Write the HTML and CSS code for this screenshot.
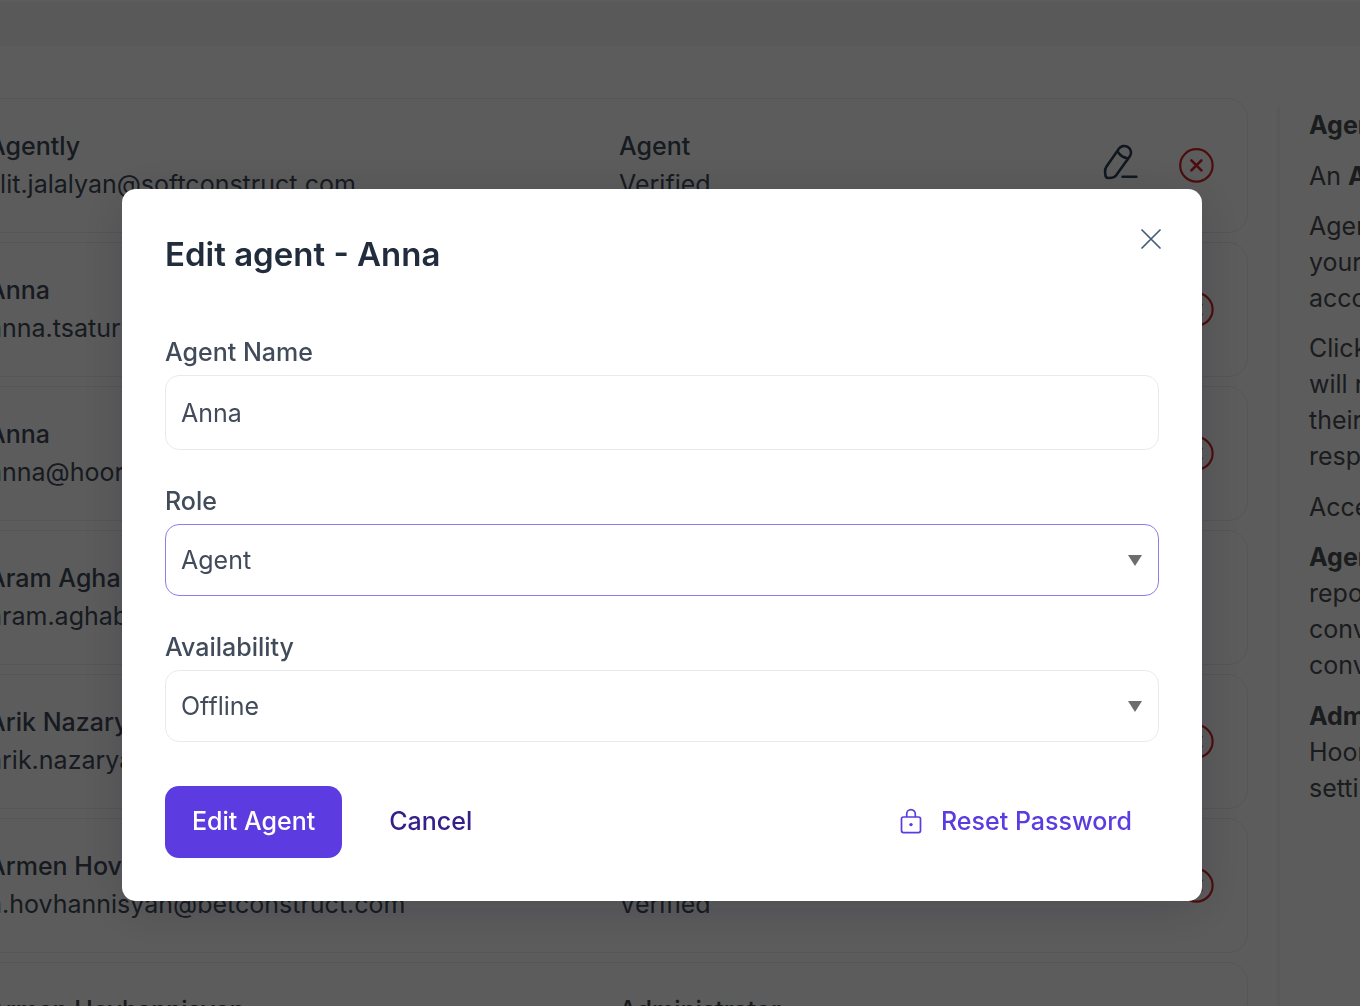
FILE: index.html
```html
<!DOCTYPE html>
<html lang="en">
<head>
<meta charset="utf-8">
<meta name="viewport" content="width=device-width, initial-scale=1">
<title>Agents</title>
<link rel="stylesheet" href="styles.css">
</head>
<body>
<svg class="sprite" aria-hidden="true">
  <symbol id="icon-edit" viewBox="-1.8 -.5 37.5 43.75">
    <g fill="none" stroke="currentColor" stroke-width="2.7" stroke-linecap="round" stroke-linejoin="round">
      <path d="M15.6 4.6C17.6 1.6 21.6 .6 25 2.6C28.6 4.8 29.4 9 27.2 12.2L12.8 32.2C11.6 33.8 10.2 34.6 8.4 34.7L5.2 34.9C3.2 35 1.8 33.8 1.7 31.8L1.4 28.4C1.2 26.4 1.7 24.6 2.9 22.9Z"/>
      <path d="M14.6 7.4C16.4 10.6 19.6 13.2 24 14.2M19.6 33.6H34"/>
    </g>
  </symbol>
  <symbol id="icon-remove" viewBox="0 0 36 36">
    <g fill="none" stroke="currentColor" stroke-linecap="round">
      <circle cx="18.4" cy="18.4" r="16.2" stroke-width="2.2"/>
      <path d="M13.4 13.4L23.4 23.4M23.4 13.4L13.4 23.4" stroke-width="2.7"/>
    </g>
  </symbol>
</svg>

<div class="page">
  <header class="topbar"></header>
  <div class="shell">
    <main class="agents">
      <article class="agent">
        <div><h2 class="name">Agently</h2><p class="detail">lilit.jalalyan@softconstruct.com</p></div>
        <div><p class="name">Agent</p><p class="detail">Verified</p></div>
        <div class="tools">
          <button class="tool edit" type="button" aria-label="Edit"><svg><use href="#icon-edit"/></svg></button>
          <button class="tool remove" type="button" aria-label="Remove"><svg><use href="#icon-remove"/></svg></button>
        </div>
      </article>
      <article class="agent">
        <div><h2 class="name">Anna</h2><p class="detail">anna.tsatur</p></div>
        <div><p class="name">Agent</p><p class="detail">Verified</p></div>
        <div class="tools">
          <button class="tool edit" type="button" aria-label="Edit"><svg><use href="#icon-edit"/></svg></button>
          <button class="tool remove" type="button" aria-label="Remove"><svg><use href="#icon-remove"/></svg></button>
        </div>
      </article>
      <article class="agent">
        <div><h2 class="name">Anna</h2><p class="detail">anna@hoory.com</p></div>
        <div><p class="name">Agent</p><p class="detail">Verified</p></div>
        <div class="tools">
          <button class="tool edit" type="button" aria-label="Edit"><svg><use href="#icon-edit"/></svg></button>
          <button class="tool remove" type="button" aria-label="Remove"><svg><use href="#icon-remove"/></svg></button>
        </div>
      </article>
      <article class="agent">
        <div><h2 class="name">Aram Aghab</h2><p class="detail">aram.aghab</p></div>
        <div><p class="name">Agent</p><p class="detail">Verified</p></div>
        <div class="tools"></div>
      </article>
      <article class="agent">
        <div><h2 class="name">Arik Nazaryan</h2><p class="detail">arik.nazaryan</p></div>
        <div><p class="name">Agent</p><p class="detail">Verified</p></div>
        <div class="tools">
          <button class="tool edit" type="button" aria-label="Edit"><svg><use href="#icon-edit"/></svg></button>
          <button class="tool remove" type="button" aria-label="Remove"><svg><use href="#icon-remove"/></svg></button>
        </div>
      </article>
      <article class="agent">
        <div><h2 class="name">Armen Hovhannisyan</h2><p class="detail">a.hovhannisyan@betconstruct.com</p></div>
        <div><p class="name">Agent</p><p class="detail">Verified</p></div>
        <div class="tools">
          <button class="tool edit" type="button" aria-label="Edit"><svg><use href="#icon-edit"/></svg></button>
          <button class="tool remove" type="button" aria-label="Remove"><svg><use href="#icon-remove"/></svg></button>
        </div>
      </article>
      <article class="agent">
        <div><h2 class="name">Armen Hovhannisyan</h2><p class="detail">Verified</p></div>
        <div><p class="name">Administrator</p><p class="detail">Verified</p></div>
        <div class="tools"></div>
      </article>
    </main>
    <aside class="help">
      <p><strong>Agents</strong></p>
      <p>An <strong>Agent</strong></p>
      <p>Agents<br>your<br>account</p>
      <p>Click<br>will receive<br>their<br>respond</p>
      <p>Access</p>
      <p><strong>Agent</strong><br>reports<br>conversations<br>conversations</p>
      <p><strong>Administrator</strong><br>Hoory<br>settings</p>
    </aside>
  </div>
</div>

<div class="overlay">
  <form class="dialog" role="dialog" aria-modal="true" aria-labelledby="dialog-title">
    <div class="dialog-head">
      <h1 class="dialog-title" id="dialog-title">Edit agent - Anna</h1>
      <button class="close" type="button" aria-label="Close">
        <svg viewBox="0 0 20 20"><path d="M1 1L19 19M19 1L1 19" fill="none" stroke="currentColor" stroke-width="1.7" stroke-linecap="round"/></svg>
      </button>
    </div>
    <div class="fields">
      <div class="field">
        <label for="agent-name">Agent Name</label>
        <input class="control text" id="agent-name" type="text" value="Anna">
      </div>
      <div class="field">
        <label for="role">Role</label>
        <div class="picker">
          <select class="control active" id="role"><option>Agent</option><option>Administrator</option></select>
          <svg class="arrow" viewBox="0 0 14 11" aria-hidden="true"><path d="M0 0H14L7 11Z" fill="currentColor"/></svg>
        </div>
      </div>
      <div class="field">
        <label for="availability">Availability</label>
        <div class="picker">
          <select class="control" id="availability"><option>Offline</option><option>Online</option></select>
          <svg class="arrow" viewBox="0 0 14 11" aria-hidden="true"><path d="M0 0H14L7 11Z" fill="currentColor"/></svg>
        </div>
      </div>
    </div>
    <div class="actions">
      <button class="button primary" type="submit">Edit Agent</button>
      <button class="button cancel" type="button">Cancel</button>
      <button class="button reset" type="button">
        <svg viewBox="0 0 22 26" aria-hidden="true"><g fill="none" stroke="currentColor" stroke-width="1.7" stroke-linejoin="round"><rect x="1.5" y="9" width="19" height="15.6" rx="2"/><path d="M6.7 9V6A4.3 4.3 0 0 1 15.3 6V9"/></g><circle cx="11" cy="16.6" r="1.7" fill="currentColor"/></svg>
        Reset Password
      </button>
    </div>
  </form>
</div>
</body>
</html>
```
FILE: styles.css
```css
:root {
  --ink: #414b5a;
  --line: #e7ebf1;
  --violet: #5c3be0;
}

* { box-sizing: border-box; }

body {
  margin: 0;
  height: 100vh;
  overflow: hidden;
  background: #fff;
  color: var(--ink);
  font: 400 25px/36px Inter, "Liberation Sans", sans-serif;
}

h1, h2, p { margin: 0; }

button {
  padding: 0;
  border: 0;
  background: none;
  color: inherit;
  font: inherit;
  cursor: pointer;
}

svg { display: block; }

.sprite {
  position: absolute;
  width: 0;
  height: 0;
}

.page {
  height: 100vh;
  overflow: hidden;
}

.topbar {
  height: 46px;
  border-top: 2px solid #fff;
  background: #f7f7f8;
}

/* The list and the help column run past both sides of the window */
.shell {
  display: grid;
  grid-template-columns: minmax(0, 1fr) 363px;
  gap: 29px;
  margin: 0 -280px 0 -40px;
  padding-top: 52px;
}

.agents {
  display: flex;
  flex-direction: column;
  gap: 9px;
}

.agent {
  display: grid;
  grid-template-columns: minmax(0, 631px) minmax(0, 1fr) auto;
  align-items: center;
  padding: 28px 33px 29px 27px;
  border: 1px solid #ebebee;
  border-radius: 20px;
  line-height: 38px;
}

.name {
  font-size: 25px;
  font-weight: 500;
}

.tools {
  display: flex;
  align-items: center;
  gap: 40px;
  color: #2e4057;
}

.tool svg {
  width: 36px;
  height: 36px;
}

.edit svg { height: 42px; }

.remove { color: #cf2626; }

.help {
  margin-top: 9px;
  padding-left: 29px;
  border-left: 3px solid #f4f5f7;
  color: #4d4f55;
  white-space: nowrap;
}

.help p { margin-bottom: 14px; }

.help p:nth-child(3n + 1),
.help p:nth-child(6) { margin-bottom: 15px; }

.overlay {
  position: fixed;
  inset: 0;
  display: flex;
  align-items: flex-start;
  justify-content: center;
  padding: 189px 36px 0 0;
  background: rgba(0, 0, 0, .64);
}

.dialog {
  width: 100%;
  max-width: 1080px;
  padding: 43px;
  border-radius: 14px;
  background: #fff;
  box-shadow: 0 8px 48px rgba(20, 20, 40, .2);
}

.dialog-head {
  display: flex;
  align-items: flex-start;
  justify-content: space-between;
}

.dialog-title {
  color: #212d3d;
  font-size: 33px;
  font-weight: 600;
  line-height: 44px;
}

.close {
  padding: 0 0 4px 4px;
  margin: -3px -2px 0 0;
  color: #455a75;
}

.close svg {
  width: 20px;
  height: 20px;
}

.fields {
  display: flex;
  flex-direction: column;
  gap: 35px;
  margin-top: 60px;
}

.field {
  display: flex;
  flex-direction: column;
  gap: 7px;
}

.field label {
  font-weight: 500;
  line-height: 32px;
}

.control {
  display: block;
  width: 100%;
  height: 72px;
  padding: 0 15px;
  border: 1px solid var(--line);
  border-radius: 14px;
  outline: 0;
  background: #fff;
  color: var(--ink);
  font: inherit;
  appearance: none;
}

.control.text { height: 75px; }
.control.active { border-color: #917be9; }

.picker {
  display: grid;
  align-items: center;
}

.picker > * { grid-area: 1 / 1; }

.arrow {
  justify-self: end;
  width: 14px;
  height: 11px;
  margin-right: 17px;
  color: #6c6d71;
  pointer-events: none;
}

.actions {
  display: flex;
  gap: 20px;
  margin-top: 44px;
}

.button {
  height: 72px;
  padding: 0 27px 2px;
  border-radius: 14px;
  font-weight: 500;
}

.primary {
  background: var(--violet);
  color: #fff;
}

.cancel { color: #35208a; }

.reset {
  display: flex;
  align-items: center;
  gap: 19px;
  margin-left: auto;
  color: var(--violet);
}

.reset svg {
  width: 22px;
  height: 26px;
}
```
